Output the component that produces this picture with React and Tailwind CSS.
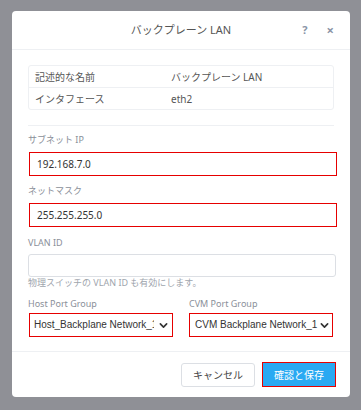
import React from 'react'

const font = { fontFamily: '"Noto Sans", "Noto Sans CJK JP", sans-serif' }
const latin = { fontFamily: '"Liberation Sans", "Noto Sans CJK JP", sans-serif' }

function Chevron() {
  return (
    <svg width="9" height="9" viewBox="0 0 10 10" className="shrink-0">
      <path d="M1.5 3.2 L5 6.8 L8.5 3.2" fill="none" stroke="#333" strokeWidth="1.8" strokeLinecap="round" strokeLinejoin="round" />
    </svg>
  )
}

function Label({ children, className = '' }) {
  return <div className={`text-[9px] leading-[12px] h-[12px] text-[#8a8f99] ${className}`}>{children}</div>
}

export default function App() {
  return (
    <div className="w-[361px] h-[410px] bg-[#8f9096] overflow-hidden pt-[11px] pl-[12px]" style={font}>
      <div className="w-[338px] h-[386px] bg-white rounded-[4px] flex flex-col">
        <div className="h-[39px] shrink-0 flex items-center border-b border-[#eef0f3] relative">
          <div className="flex-1 text-center text-[11px] leading-[14px] text-[#555]">バックプレーン LAN</div>
          <div className="absolute right-[16px] top-[12px] flex items-center gap-[19px] text-[#8a94a6]">
            <span className="text-[11px] font-bold leading-[14px]">?</span>
            <span className="text-[13px] font-bold leading-[14px]">×</span>
          </div>
        </div>

        <div className="px-[16px] pt-[15px]">
          <div className="border border-[#eef0f3] rounded-[3px] text-[10px] leading-[14px] text-[#555]">
            <div className="flex h-[22px] items-center border-b border-[#eef0f3]">
              <div className="w-[142px] pl-[6px]">記述的な名前</div>
              <div>バックプレーン LAN</div>
            </div>
            <div className="flex h-[21px] items-center">
              <div className="w-[142px] pl-[6px]">インタフェース</div>
              <div>eth2</div>
            </div>
          </div>
          <div className="mt-[15px] border-t border-[#eef0f3]"></div>

          <Label className="mt-[8px]">サブネット IP</Label>
          <div className="mt-[6px] ml-[1px] w-[308px] h-[24px] border border-[#e60000] flex items-center pl-[7px] text-[10px] leading-[14px] text-[#333]">192.168.7.0</div>

          <Label className="mt-[9px]">ネットマスク</Label>
          <div className="mt-[6px] ml-[1px] w-[308px] h-[24px] border border-[#e60000] flex items-center pl-[7px] text-[10px] leading-[14px] text-[#333]">255.255.255.0</div>

          <Label className="mt-[10px]">VLAN ID</Label>
          <div className="mt-[5px] w-[308px] h-[23px] border border-[#dcdfe4] rounded-[3px]"></div>
          <div className="text-[9px] leading-[12px] h-[12px] text-[#a0a5ad]">物理スイッチの VLAN ID も有効にします。</div>

          <div className="mt-[9px] flex">
            <div className="w-[161px]">
              <Label>Host Port Group</Label>
              <div className="mt-[3px] ml-[1px] w-[144px] h-[24px] border border-[#e60000] flex items-center pl-[4px] pr-[4px] text-[10px] leading-[14px] text-[#333]" style={latin}>
                <span className="w-[120px] overflow-hidden whitespace-nowrap">Host_Backplane Network_1</span>
                <span className="ml-auto"><Chevron /></span>
              </div>
            </div>
            <div>
              <Label>CVM Port Group</Label>
              <div className="mt-[3px] w-[144px] h-[24px] border border-[#e60000] flex items-center pl-[5px] pr-[4px] gap-[3px] text-[10px] leading-[14px] text-[#333]" style={latin}>
                <span className="flex-1 whitespace-nowrap">CVM Backplane Network_1</span>
                <Chevron />
              </div>
            </div>
          </div>
        </div>

        <div className="mt-[14px] border-t border-[#eef0f3]"></div>
        <div className="flex justify-end items-center gap-[7px] px-[14px] pt-[10px]">
          <div className="w-[74px] h-[24px] border border-[#dcdfe4] rounded-[3px] flex items-center justify-center text-[10px] leading-[14px] text-[#444]">キャンセル</div>
          <div className="w-[74px] h-[25px] border border-[#e60000] bg-[#29a9f2] flex items-center justify-center text-[10px] leading-[14px] text-white">確認と保存</div>
        </div>
      </div>
    </div>
  )
}
